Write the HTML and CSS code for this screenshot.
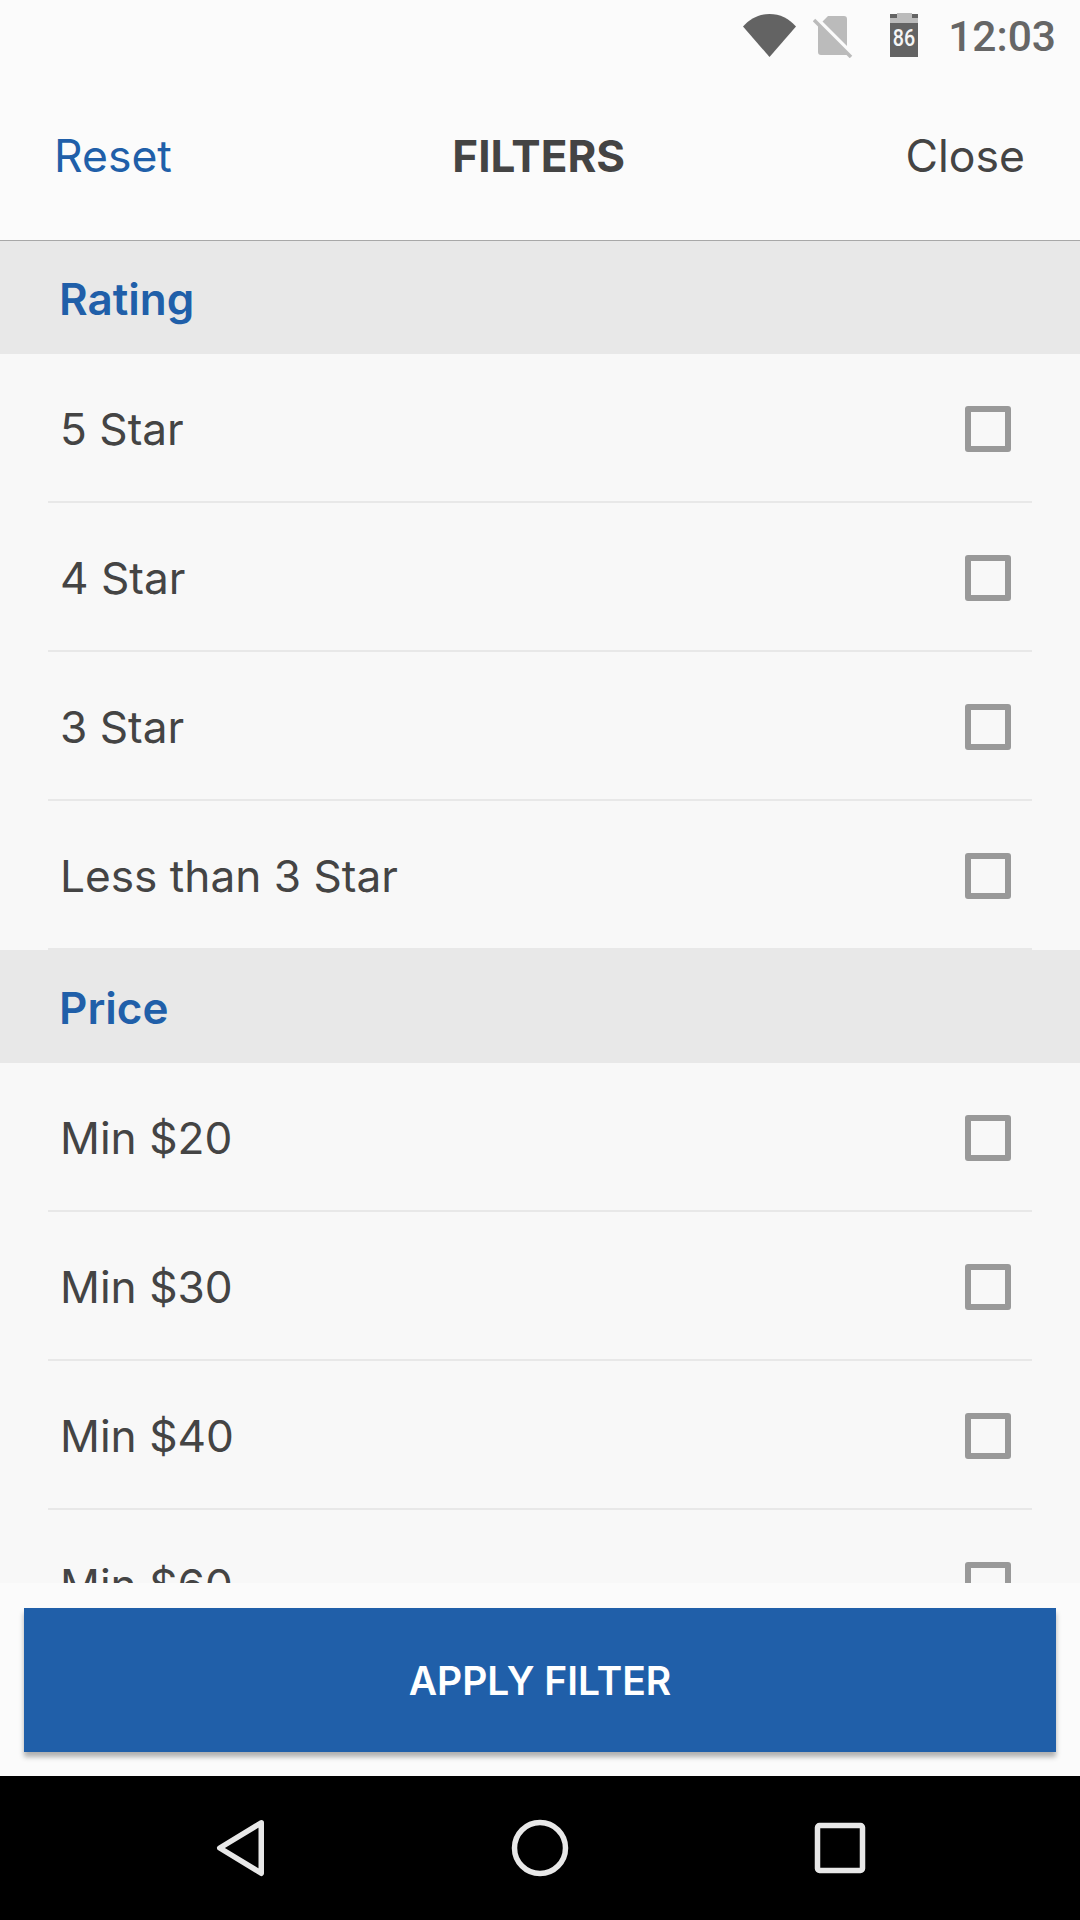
FILE: index.html
```html
<!DOCTYPE html>
<html lang="en">
<head>
<meta charset="utf-8">
<title>Filters</title>
<link rel="stylesheet" href="styles.css">
</head>
<body>
<div class="phone">
  <div class="status">
    <svg class="ic-wifi" width="53" height="43" viewBox="0 0 53 43"><path d="M0 12.500C7 4.500 16 0 26.500 0S46 4.500 53 12.500L26.500 43Z" fill="#636363"/></svg>
    <svg class="ic-sim" width="40" height="42" viewBox="0 0 40 42"><path d="M15 0H31a3 3 0 0 1 3 3V30L9.500 5.500ZM5 8 34 37V39H8a3 3 0 0 1-3-3Z" fill="#bbb"/><path d="M1 4 38 41" stroke="#bbb" stroke-width="3.500"/></svg>
    <div class="battery"><span class="cap"></span><span class="lvl"></span><span class="pct">86</span></div>
    <span class="time">12:03</span>
  </div>
  <header class="topbar">
    <span class="link">Reset</span>
    <span class="title">FILTERS</span>
    <span class="close">Close</span>
  </header>
  <main class="list">
    <h2 class="sec">Rating</h2>
    <div class="row"><span class="label">5 Star</span><i class="box"></i></div>
    <div class="row"><span class="label">4 Star</span><i class="box"></i></div>
    <div class="row"><span class="label">3 Star</span><i class="box"></i></div>
    <div class="row"><span class="label">Less than 3 Star</span><i class="box"></i></div>
    <h2 class="sec">Price</h2>
    <div class="row"><span class="label">Min $20</span><i class="box"></i></div>
    <div class="row"><span class="label">Min $30</span><i class="box"></i></div>
    <div class="row"><span class="label">Min $40</span><i class="box"></i></div>
    <div class="row"><span class="label">Min $60</span><i class="box"></i></div>
  </main>
  <footer class="foot"><button class="apply">APPLY FILTER</button></footer>
  <nav class="nav">
    <svg width="52" height="58" viewBox="0 0 52 58"><path d="M47.250 3.750 5.750 29 47.250 54.250Z" fill="none" stroke="#e8e8e8" stroke-width="5.500" stroke-linejoin="round"/></svg>
    <svg width="58" height="58" viewBox="0 0 58 58"><circle cx="29" cy="29" r="25.500" fill="none" stroke="#e8e8e8" stroke-width="5.500"/></svg>
    <svg width="52" height="52" viewBox="0 0 52 52"><rect x="3.500" y="3.500" width="45" height="45" rx="2" fill="none" stroke="#e8e8e8" stroke-width="5.500"/></svg>
  </nav>
</div>
</body>
</html>
```
FILE: styles.css
```css
* { box-sizing: border-box; }
html, body { margin: 0; padding: 0; }
body { width: 1080px; height: 1920px; overflow: hidden; font-family: Inter, Lato, sans-serif; background: #fbfbfb; }
.phone { width: 1080px; height: 1920px; display: flex; flex-direction: column; }

.status { height: 72px; flex: none; display: flex; align-items: flex-start; padding: 14px 24px 0 0; justify-content: flex-end; background: #fbfbfb; }
.ic-wifi { margin-right: 17px; }
.ic-sim { margin-top: 2px; margin-right: 37px; }
.battery { position: relative; width: 28px; height: 43px; margin-right: 30px; background: #636363; }
.battery .cap { position: absolute; left: 7px; right: 6px; top: -1px; height: 5px; background: #bbb; }
.battery .lvl { position: absolute; left: 0; right: 0; top: 4px; height: 5px; background: #bbb; }
.battery .pct { position: absolute; left: 0; right: 0; top: 12px; text-align: center; font: 500 24px/24px Roboto, sans-serif; color: #f5f5f5; transform: scaleX(.82); }
.time { font: 500 42.500px/1 Roboto, sans-serif; color: #666; margin-top: 2px; }

.topbar { height: 169px; flex: none; display: flex; justify-content: space-between; align-items: flex-start; padding: 62px 55px 0 54px; border-bottom: 1px solid #a8a8a8; background: #fbfbfb; font-size: 44.500px; line-height: 44px; }
.link { color: #205fa9; }
.title { color: #444; font-weight: 700; font-size: 44px; }
.close { color: #444; }

.list { flex: 1; min-height: 0; overflow: hidden; background: #f8f8f8; }
.sec { margin: 0; height: 113px; padding: 2px 60px 0 59px; display: flex; align-items: center; background: #e8e8e8; color: #205fa9; font-size: 44px; font-weight: 600; }
.row { height: 149px; margin: 0 48px; padding: 0 21px 0 12px; display: flex; align-items: center; justify-content: space-between; border-bottom: 2px solid #e8e8e8; font-size: 44.200px; color: #444; }
.label { padding-top: 2px; }
.box { width: 46px; height: 46px; margin-top: 3px; border: 6px solid #999; border-radius: 3px; }

.foot { height: 193px; flex: none; padding: 25px 24px 0; background: #fbfbfb; }
.apply { display: block; width: 100%; height: 144px; border: 0; border-radius: 0; background: #205fa9; color: #fff; font: 600 39px Inter, sans-serif; box-shadow: 0 5px 5px rgba(0,0,0,.3); }

.nav { height: 144px; flex: none; background: #000; display: flex; align-items: center; justify-content: space-between; padding: 0 214px; }
```
